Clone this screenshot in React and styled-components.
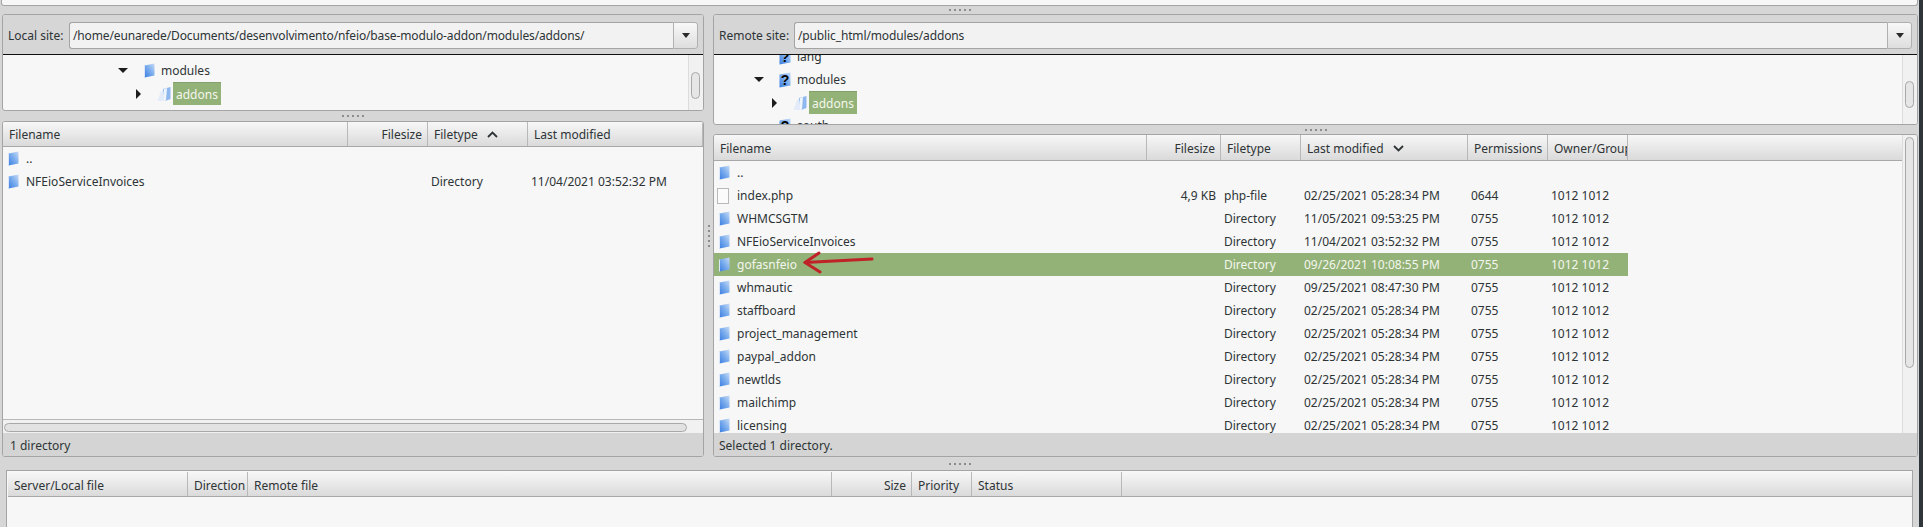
import React from "react";
import styled, { createGlobalStyle } from "styled-components";

const GlobalStyle = createGlobalStyle`
  html, body {
    margin: 0;
    padding: 0;
    background: #d6d6d6;
    overflow: hidden;
  }
  * { box-sizing: border-box; }
`;

const localCols = [
  { title: "Filename", width: 345 },
  { title: "Filesize", width: 80, right: true },
  { title: "Filetype", width: 100, sort: "up" },
  { title: "Last modified", width: 175 },
];

const remoteCols = [
  { title: "Filename", width: 433 },
  { title: "Filesize", width: 74, right: true },
  { title: "Filetype", width: 80 },
  { title: "Last modified", width: 167, sort: "down" },
  { title: "Permissions", width: 80 },
  { title: "Owner/Group", width: 80 },
];

const queueCols = [
  { title: "Server/Local file", width: 180 },
  { title: "Direction", width: 60 },
  { title: "Remote file", width: 584 },
  { title: "Size", width: 80, right: true },
  { title: "Priority", width: 60 },
  { title: "Status", width: 150 },
];

const localFiles = [
  { name: "..", icon: "folder" },
  { name: "NFEioServiceInvoices", icon: "folder", type: "Directory", modified: "11/04/2021 03:52:32 PM" },
];

const remoteFiles = [
  { name: "..", icon: "folder" },
  { name: "index.php", icon: "file", size: "4,9 KB", type: "php-file", modified: "02/25/2021 05:28:34 PM", perms: "0644", owner: "1012 1012" },
  { name: "WHMCSGTM", modified: "11/05/2021 09:53:25 PM" },
  { name: "NFEioServiceInvoices", modified: "11/04/2021 03:52:32 PM" },
  { name: "gofasnfeio", modified: "09/26/2021 10:08:55 PM", selected: true },
  { name: "whmautic", modified: "09/25/2021 08:47:30 PM" },
  { name: "staffboard", modified: "02/25/2021 05:28:34 PM" },
  { name: "project_management", modified: "02/25/2021 05:28:34 PM" },
  { name: "paypal_addon", modified: "02/25/2021 05:28:34 PM" },
  { name: "newtlds", modified: "02/25/2021 05:28:34 PM" },
  { name: "mailchimp", modified: "02/25/2021 05:28:34 PM" },
  { name: "licensing", modified: "02/25/2021 05:28:34 PM" },
].map((f) =>
  f.name === ".." || f.icon === "file"
    ? f
    : { icon: "folder", type: "Directory", perms: "0755", owner: "1012 1012", ...f }
);

const Window = styled.div`
  width: 1923px;
  height: 527px;
  display: flex;
  overflow: hidden;
  font-family: "Noto Sans", sans-serif;
  font-size: 12px;
  color: #2e3436;
`;

const Main = styled.div`
  width: 1919px;
  display: flex;
  flex-direction: column;
`;

const EdgeStrip = styled.div`
  width: 4px;
  background: #2f3538;
`;

const TopPane = styled.div`
  height: 6px;
  margin: 0 1px 0 1px;
  background: #f7f7f7;
  border: 1px solid #a4a4a4;
  border-top: none;
  border-radius: 0 0 3px 3px;
`;

const Splitter = styled.div`
  height: ${(p) => p.$size}px;
  flex-shrink: 0;
  display: flex;
  align-items: center;
  justify-content: center;
`;

const VSplitter = styled.div`
  width: 9px;
  flex-shrink: 0;
  display: flex;
  align-items: center;
  justify-content: center;
`;

const Dots = styled.div`
  display: flex;
  flex-direction: ${(p) => (p.$vertical ? "column" : "row")};
  gap: 3px;
  i {
    width: 2px;
    height: 2px;
    background: #8c8c8c;
    display: block;
  }
`;

const Workspace = styled.div`
  height: 443px;
  padding-left: 2px;
  display: flex;
  flex-shrink: 0;
`;

const Side = styled.div`
  width: ${(p) => p.$width}px;
  display: flex;
  flex-direction: column;
`;

const Panel = styled.div`
  display: flex;
  flex-direction: column;
  flex: ${(p) => (p.$height ? "none" : 1)};
  height: ${(p) => (p.$height ? `${p.$height}px` : "auto")};
  min-height: 0;
  border: 1px solid #a4a4a4;
  border-radius: 3px;
  overflow: hidden;
  background: #f7f7f7;
`;

const SiteBar = styled.div`
  height: 40px;
  flex-shrink: 0;
  display: flex;
  align-items: center;
  padding: 2px 5px 0 ${(p) => p.$pad}px;
  background: #d6d6d6;
  border-bottom: 1px solid #111;
`;

const SiteLabel = styled.span`
  width: ${(p) => p.$width}px;
  flex-shrink: 0;
`;

const ComboInput = styled.div`
  flex: 1;
  height: 27px;
  line-height: 25px;
  padding-left: 3px;
  letter-spacing: -0.13px;
  background: #f2f2f2;
  border: 1px solid #a4a4a4;
  border-right: none;
  border-radius: 3px 0 0 3px;
  white-space: nowrap;
  overflow: hidden;
`;

const ComboButton = styled.div`
  width: 25px;
  height: 27px;
  display: flex;
  align-items: center;
  justify-content: center;
  background: linear-gradient(#f8f8f8, #dedede);
  border: 1px solid #b0b0b0;
  border-radius: 0 3px 3px 0;
`;

const DownTri = styled.span`
  width: 0;
  height: 0;
  border-left: 4.5px solid transparent;
  border-right: 4.5px solid transparent;
  border-top: 5px solid #2a2a2a;
`;

const TreeArea = styled.div`
  flex: 1;
  min-height: 0;
  display: flex;
`;

const TreeBody = styled.div`
  flex: 1;
  min-width: 0;
  overflow: hidden;
  padding-top: ${(p) => p.$top}px;
  > div:first-child {
    margin-top: ${(p) => p.$shift}px;
  }
`;

const TreeRow = styled.div`
  height: 23px;
  display: flex;
  align-items: center;
  padding-left: ${(p) => p.$indent}px;
`;

const Expander = styled.span`
  width: 14px;
  margin-right: 12px;
  display: flex;
  justify-content: center;
  flex-shrink: 0;
`;

const TreeIcon = styled.span`
  width: 14px;
  flex-shrink: 0;
  display: flex;
  justify-content: center;
`;

const TreeDownArrow = styled.span`
  width: 0;
  height: 0;
  border-left: 5.5px solid transparent;
  border-right: 5.5px solid transparent;
  border-top: 5.5px solid #1d1d1d;
`;

const TreeRightArrow = styled.span`
  width: 0;
  height: 0;
  border-top: 5.5px solid transparent;
  border-bottom: 5.5px solid transparent;
  border-left: 5.5px solid #1d1d1d;
`;

const TreeLabel = styled.span`
  height: 23px;
  line-height: 23px;
  margin-left: 2px;
  padding: 0 3px;
  background: ${(p) => (p.$selected ? "#93b277" : "transparent")};
  color: ${(p) => (p.$selected ? "#f4f6ee" : "inherit")};
  border-top: ${(p) => (p.$selected ? "1px solid #84a06b" : "none")};
`;

const VScroll = styled.div`
  width: 15px;
  flex-shrink: 0;
  padding: ${(p) => p.$top}px 3px 0 2px;
  background: #f1f1f1;
  border-left: 1px solid #dcdcdc;
`;

const VThumb = styled.div`
  height: ${(p) => p.$height}px;
  background: #e6e6e6;
  border: 1px solid #a8a8a8;
  border-radius: 5px;
`;

const HScroll = styled.div`
  height: 14px;
  flex-shrink: 0;
  padding: 3px 16px 2px 1px;
  background: #f1f1f1;
  border-top: 1px solid #b8b8b8;
`;

const HThumb = styled.div`
  height: 9px;
  background: #e2e2e2;
  border: 1px solid #a8a8a8;
  border-radius: 5px;
`;

const ListArea = styled.div`
  flex: 1;
  min-height: 0;
  display: flex;
`;

const ListBody = styled.div`
  flex: 1;
  min-width: 0;
  overflow: hidden;
  display: flex;
  flex-direction: column;
`;

const HeaderRow = styled.div`
  height: ${(p) => p.$height}px;
  flex-shrink: 0;
  display: flex;
  background: linear-gradient(#f7f7f7, #dadada);
  border-bottom: 1px solid #a8a8a8;
`;

const HeaderCell = styled.div`
  width: ${(p) => p.$width}px;
  flex-shrink: 0;
  display: flex;
  align-items: center;
  justify-content: ${(p) => (p.$right ? "flex-end" : "flex-start")};
  gap: 9px;
  padding: ${(p) => p.$nudge}px 5px 0 6px;
  border-right: 1px solid #b8b8b8;
  overflow: hidden;
  white-space: nowrap;
`;

const Rows = styled.div`
  flex: 1;
  min-height: 0;
  overflow: hidden;
`;

const Row = styled.div`
  position: relative;
  height: 23px;
  width: ${(p) => p.$width}px;
  display: flex;
  align-items: center;
  background: ${(p) => (p.$selected ? "#93b277" : "transparent")};
  color: ${(p) => (p.$selected ? "#f4f6ee" : "inherit")};
`;

const NameCell = styled.div`
  width: ${(p) => p.$width}px;
  flex-shrink: 0;
  display: flex;
  align-items: center;
  gap: 7px;
  padding-left: 5px;
  white-space: nowrap;
`;

const Cell = styled.div`
  width: ${(p) => p.$width}px;
  flex-shrink: 0;
  padding: 0 5px 0 3px;
  text-align: ${(p) => (p.$right ? "right" : "left")};
  white-space: nowrap;
`;

const StatusBar = styled.div`
  height: 23px;
  flex-shrink: 0;
  line-height: 25px;
  padding-left: ${(p) => p.$pad}px;
  background: #d4d4d4;
`;

const QueuePanel = styled.div`
  flex: 1;
  margin: 0 6px;
  padding: 1px 0 0 1px;
  border: 1px solid #a4a4a4;
  border-bottom: none;
  background: #f7f7f7;
  display: flex;
  flex-direction: column;
`;

const MarkArrow = styled.svg`
  position: absolute;
  left: 88px;
  top: -2px;
`;

const FileGlyph = styled.span`
  width: 12px;
  height: 16px;
  margin: 0 1px 0 -2px;
  flex-shrink: 0;
  background: #fbfbfb;
  border: 1px solid #b9b9b9;
`;

const Gradient = ({ id }) => (
  <defs>
    <linearGradient id={id} x1="0" y1="1" x2="1" y2="0">
      <stop offset="0" stopColor="#3b7de0" />
      <stop offset="0.55" stopColor="#7fb0ee" />
      <stop offset="1" stopColor="#c9dcf6" />
    </linearGradient>
  </defs>
);

const FolderIcon = () => (
  <svg width="11" height="15" viewBox="0 0 11 15">
    <Gradient id="folderFill" />
    <path d="M0.5 2.5 L10.5 0.5 L10.5 12.5 L0.5 14.5 Z" fill="url(#folderFill)" />
    <path d="M0.5 2.5 L0.5 14.5" stroke="#dbe7f8" strokeWidth="1" />
  </svg>
);

const UnknownFolderIcon = () => (
  <svg width="14" height="16" viewBox="0 0 14 16">
    <Gradient id="folderFill" />
    <path d="M1.5 2.5 L12.5 0.5 L12.5 13.5 L1.5 15.5 Z" fill="url(#folderFill)" />
    <text x="7" y="13" textAnchor="middle" fontFamily="Liberation Sans" fontWeight="700" fontSize="14" fill="#000">?</text>
  </svg>
);

const OpenFolderIcon = () => (
  <svg width="14" height="16" viewBox="0 0 14 16">
    <path d="M0.5 15 L4 5 L8 3 L7 15 Z" fill="#e3ecf8" />
    <path d="M6 3 L13.5 1 L13.5 13 L8 15 Z" fill="#8db7ee" />
    <path d="M7 3 L10 2 L9 14.5 L7 15 Z" fill="#eef4fc" />
  </svg>
);

const SortArrow = ({ dir }) => (
  <svg width="11" height="7" viewBox="0 0 11 7">
    <path d={dir === "up" ? "M1 6 L5.5 1.5 L10 6" : "M1 1 L5.5 5.5 L10 1"} fill="none" stroke="#2e3436" strokeWidth="1.8" />
  </svg>
);

const dotList = [0, 1, 2, 3, 4];

const DotGrip = ({ vertical }) => (
  <Dots $vertical={vertical}>
    {dotList.map((d) => (
      <i key={d} />
    ))}
  </Dots>
);

const Header = ({ cols, height, nudge = 0 }) => (
  <HeaderRow $height={height}>
    {cols.map((c) => (
      <HeaderCell key={c.title} $width={c.width} $right={c.right} $nudge={nudge}>
        {c.title}
        {c.sort && <SortArrow dir={c.sort} />}
      </HeaderCell>
    ))}
  </HeaderRow>
);

const SiteHeader = ({ label, labelWidth, pad, path }) => (
  <SiteBar $pad={pad}>
    <SiteLabel $width={labelWidth}>{label}</SiteLabel>
    <ComboInput>{path}</ComboInput>
    <ComboButton>
      <DownTri />
    </ComboButton>
  </SiteBar>
);

const FileRow = ({ file, cols }) => {
  const total = cols.reduce((sum, c) => sum + c.width, 0);
  const rest = [file.size, file.type, file.modified, file.perms, file.owner];
  return (
    <Row $width={total} $selected={file.selected}>
      <NameCell $width={cols[0].width}>
        {file.icon === "file" ? <FileGlyph /> : <FolderIcon />}
        {file.name}
      </NameCell>
      {cols.slice(1).map((c, i) => (
        <Cell key={c.title} $width={c.width} $right={c.right}>
          {rest[i]}
        </Cell>
      ))}
      {file.selected && (
        <MarkArrow width="72" height="26" viewBox="0 0 72 26">
          <path d="M3 11.5 L70 8" stroke="#bf2229" strokeWidth="3" fill="none" strokeLinecap="round" />
          <path d="M17 2 L3 11.5 L18 21" stroke="#bf2229" strokeWidth="3" fill="none" strokeLinecap="round" strokeLinejoin="round" />
        </MarkArrow>
      )}
    </Row>
  );
};

const App = () => (
  <Window>
    <GlobalStyle />
    <Main>
      <TopPane />
      <Splitter $size={8}>
        <DotGrip />
      </Splitter>
      <Workspace>
        <Side $width={702}>
          <Panel $height={97}>
            <SiteHeader
              label="Local site:"
              labelWidth={61}
              pad={5}
              path="/home/eunarede/Documents/desenvolvimento/nfeio/base-modulo-addon/modules/addons/"
            />
            <TreeArea>
              <TreeBody $top={4} $shift={0}>
                <TreeRow $indent={113}>
                  <Expander>
                    <TreeDownArrow />
                  </Expander>
                  <TreeIcon>
                    <FolderIcon />
                  </TreeIcon>
                  <TreeLabel>modules</TreeLabel>
                </TreeRow>
                <TreeRow $indent={128}>
                  <Expander>
                    <TreeRightArrow />
                  </Expander>
                  <OpenFolderIcon />
                  <TreeLabel $selected>addons</TreeLabel>
                </TreeRow>
              </TreeBody>
              <VScroll $top={17}>
                <VThumb $height={27} />
              </VScroll>
            </TreeArea>
          </Panel>
          <Splitter $size={10}>
            <DotGrip />
          </Splitter>
          <Panel>
            <ListArea>
              <ListBody>
                <Header cols={localCols} height={25} />
                <Rows>
                  {localFiles.map((f) => (
                    <FileRow key={f.name} file={f} cols={localCols} />
                  ))}
                </Rows>
              </ListBody>
            </ListArea>
            <HScroll>
              <HThumb />
            </HScroll>
            <StatusBar $pad={7}>1 directory</StatusBar>
          </Panel>
        </Side>
        <VSplitter>
          <DotGrip vertical />
        </VSplitter>
        <Side $width={1205}>
          <Panel $height={111}>
            <SiteHeader label="Remote site:" labelWidth={75} pad={5} path="/public_html/modules/addons" />
            <TreeArea>
              <TreeBody $top={0} $shift={-10}>
                <TreeRow $indent={38}>
                  <Expander />
                  <UnknownFolderIcon />
                  <TreeLabel>lang</TreeLabel>
                </TreeRow>
                <TreeRow $indent={38}>
                  <Expander>
                    <TreeDownArrow />
                  </Expander>
                  <UnknownFolderIcon />
                  <TreeLabel>modules</TreeLabel>
                </TreeRow>
                <TreeRow $indent={53}>
                  <Expander>
                    <TreeRightArrow />
                  </Expander>
                  <OpenFolderIcon />
                  <TreeLabel $selected>addons</TreeLabel>
                </TreeRow>
                <TreeRow $indent={38}>
                  <Expander />
                  <UnknownFolderIcon />
                  <TreeLabel>south</TreeLabel>
                </TreeRow>
              </TreeBody>
              <VScroll $top={26}>
                <VThumb $height={27} />
              </VScroll>
            </TreeArea>
          </Panel>
          <Splitter $size={9}>
            <DotGrip />
          </Splitter>
          <Panel>
            <ListArea>
              <ListBody>
                <Header cols={remoteCols} height={26} nudge={2} />
                <Rows>
                  {remoteFiles.map((f) => (
                    <FileRow key={f.name} file={f} cols={remoteCols} />
                  ))}
                </Rows>
              </ListBody>
              <VScroll $top={2}>
                <VThumb $height={231} />
              </VScroll>
            </ListArea>
            <StatusBar $pad={5}>Selected 1 directory.</StatusBar>
          </Panel>
        </Side>
      </Workspace>
      <Splitter $size={13}>
        <DotGrip />
      </Splitter>
      <QueuePanel>
        <Header cols={queueCols} height={25} nudge={2} />
      </QueuePanel>
    </Main>
    <EdgeStrip />
  </Window>
);

export default App;
